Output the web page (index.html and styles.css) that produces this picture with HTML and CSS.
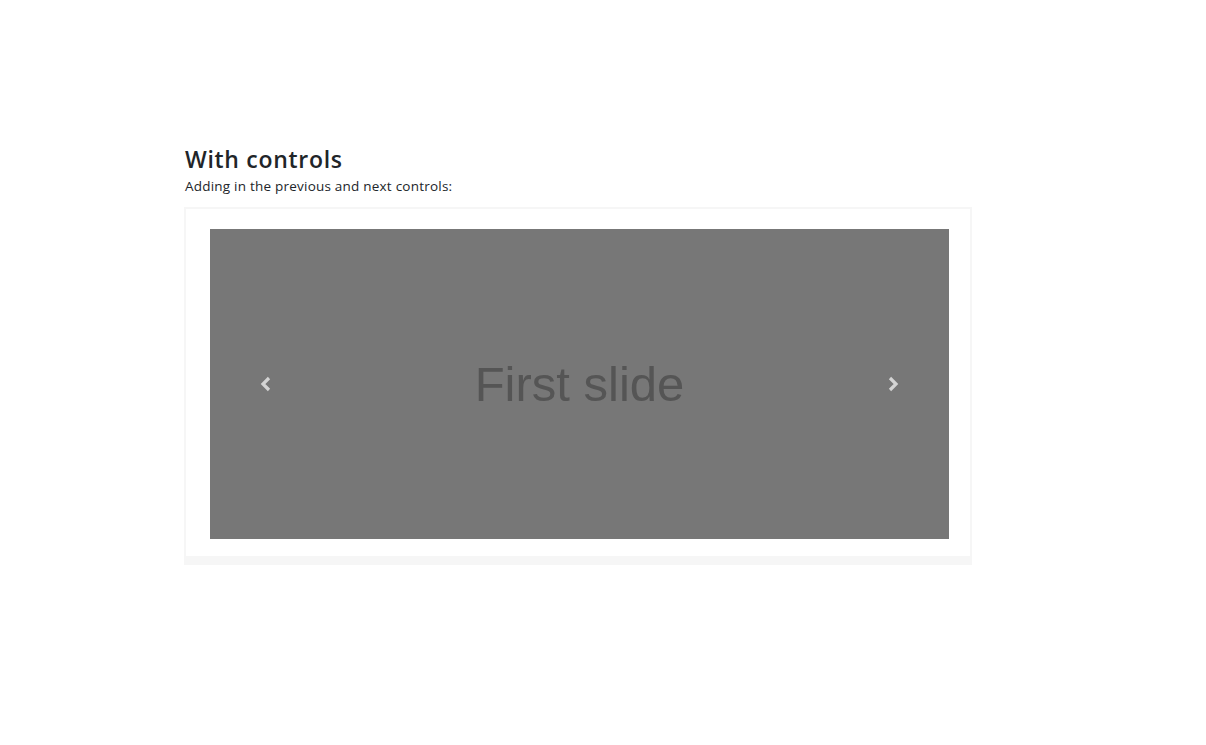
FILE: index.html
```html
<!DOCTYPE html>
<html>
<head>
<meta charset="utf-8">
<link rel="stylesheet" href="styles.css">
</head>
<body>
<main class="page">
  <section class="section">
    <h2 class="title">With controls</h2>
    <p class="lead">Adding in the previous and next controls:</p>
    <div class="example">
      <div class="carousel">
        <button class="ctrl prev" aria-label="Previous">
          <svg width="14" height="16" viewBox="0 0 14 16"><path d="M10 2 L4 8 L10 14" fill="none" stroke="currentColor" stroke-width="3.2" stroke-linejoin="miter"/></svg>
        </button>
        <div class="slide-text">First slide</div>
        <button class="ctrl next" aria-label="Next">
          <svg width="14" height="16" viewBox="0 0 14 16"><path d="M4 2 L10 8 L4 14" fill="none" stroke="currentColor" stroke-width="3.2" stroke-linejoin="miter"/></svg>
        </button>
      </div>
    </div>
  </section>
</main>
</body>
</html>
```
FILE: styles.css
```css
html, body {
  margin: 0;
  padding: 0;
  background: #fff;
}
body {
  font-family: "Open Sans", "Noto Sans", sans-serif;
  color: #222;
}
.page {
  padding-top: 143px;
  padding-left: 184px;
  width: 788px;
}
.title {
  margin: 0;
  font-size: 23px;
  font-weight: 600;
  line-height: 32px;
  color: #212529;
  letter-spacing: 0.7px;
  padding-left: 1px;
}
.lead {
  margin: 2px 0 12px 1px;
  font-size: 13.5px;
  line-height: 18px;
  color: #212529;
  letter-spacing: 0.22px;
}
.example {
  border: 2px solid #f6f6f6;
  border-bottom-width: 9px;
  padding: 20px 21px 17px 24px;
}
.carousel {
  height: 310px;
  background: #777;
  display: flex;
  align-items: center;
  justify-content: space-between;
}
.slide-text {
  font-family: "Liberation Sans", Arial, sans-serif;
  font-size: 49px;
  color: #555;
}
.ctrl {
  background: none;
  border: 0;
  padding: 0;
  width: 110px;
  height: 100%;
  color: #d4d4d4;
  display: flex;
  align-items: center;
  justify-content: center;
  cursor: pointer;
}
.ctrl svg {
  display: block;
}
.prev svg { margin-left: 1px; }
.next svg { margin-left: -1px; }
```
